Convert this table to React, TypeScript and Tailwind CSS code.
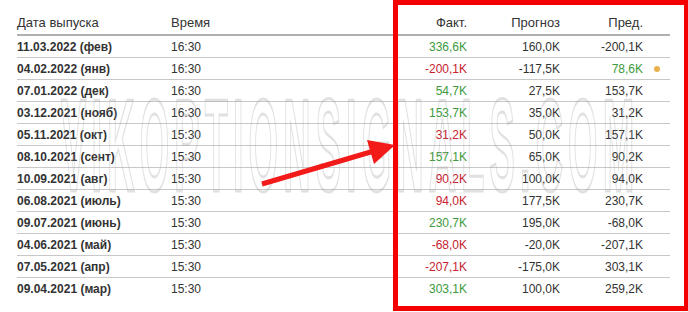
import React from "react";

type Row = { d: string; t: string; a: string; ac: "g" | "r"; f: string; p: string; pc?: "g"; dot?: boolean };

const rows: Row[] = [
  { d: "11.03.2022 (фев)", t: "16:30", a: "336,6K", ac: "g", f: "160,0K", p: "-200,1K" },
  { d: "04.02.2022 (янв)", t: "16:30", a: "-200,1K", ac: "r", f: "-117,5K", p: "78,6K", pc: "g", dot: true },
  { d: "07.01.2022 (дек)", t: "16:30", a: "54,7K", ac: "g", f: "27,5K", p: "153,7K" },
  { d: "03.12.2021 (нояб)", t: "16:30", a: "153,7K", ac: "g", f: "35,0K", p: "31,2K" },
  { d: "05.11.2021 (окт)", t: "15:30", a: "31,2K", ac: "r", f: "50,0K", p: "157,1K" },
  { d: "08.10.2021 (сент)", t: "15:30", a: "157,1K", ac: "g", f: "65,0K", p: "90,2K" },
  { d: "10.09.2021 (авг)", t: "15:30", a: "90,2K", ac: "r", f: "100,0K", p: "94,0K" },
  { d: "06.08.2021 (июль)", t: "15:30", a: "94,0K", ac: "r", f: "177,5K", p: "230,7K" },
  { d: "09.07.2021 (июнь)", t: "15:30", a: "230,7K", ac: "g", f: "195,0K", p: "-68,0K" },
  { d: "04.06.2021 (май)", t: "15:30", a: "-68,0K", ac: "r", f: "-20,0K", p: "-207,1K" },
  { d: "07.05.2021 (апр)", t: "15:30", a: "-207,1K", ac: "r", f: "-175,0K", p: "303,1K" },
  { d: "09.04.2021 (мар)", t: "15:30", a: "303,1K", ac: "g", f: "100,0K", p: "259,2K" },
];

const cols = "grid grid-cols-[154px_200px_96px_93px_83px_27px]";

export default function App() {
  return (
    <div
      className="relative w-[688px] h-[312px] bg-white overflow-hidden text-[#333]"
      style={{ fontFamily: '"Liberation Sans", Arial, sans-serif' }}
    >
      <div className="pl-[17px] w-[670px]">
        <div className={`${cols} border-b-2 border-[#b0b0b0] h-[36px] text-[13px] leading-[15px] pt-[15px]`}>
          <div>Дата выпуска</div>
          <div>Время</div>
          <div className="text-right">Факт.</div>
          <div className="text-right">Прогноз</div>
          <div className="text-right">Пред.</div>
          <div />
        </div>
        {rows.map((r, i) => (
          <div
            key={i}
            className={`${cols} h-[22px] items-center text-[12px] leading-[14px] ${i < rows.length - 1 ? "border-b border-[#c8c8c8]" : ""}`}
          >
            <div className="font-bold">{r.d}</div>
            <div>{r.t}</div>
            <div className={`text-right ${r.ac === "g" ? "text-[#3c9a3c]" : "text-[#c6232f]"}`}>{r.a}</div>
            <div className="text-right">{r.f}</div>
            <div className={`text-right ${r.pc === "g" ? "text-[#3c9a3c]" : ""}`}>{r.p}</div>
            <div className="flex items-center justify-center">
              {r.dot && <span className="block w-[6px] h-[6px] rounded-full bg-[#e9b04c]" />}
            </div>
          </div>
        ))}
      </div>

      {/* watermark */}
      <div className="absolute left-[55px] top-[98px] w-[590px] h-[96px] flex items-center justify-center pointer-events-none">
        <span
          className="block text-[44px] leading-none font-bold tracking-[6px] text-transparent [-webkit-text-stroke:1px_rgba(170,170,170,0.35)] scale-y-[3] scale-x-[0.86] whitespace-nowrap"
          style={{ fontFamily: '"Liberation Sans", Arial, sans-serif' }}
        >
          VIKOPTIONSIGNALS.COM
        </span>
      </div>

      {/* red frame */}
      <div className="absolute left-[393px] top-0 w-[296px] h-[311px] border-[5px] border-[#f40000] pointer-events-none" />

      {/* arrow */}
      <svg className="absolute left-0 top-0 pointer-events-none" width="688" height="312">
        <line x1="262" y1="184" x2="374" y2="151" stroke="#f31a1a" strokeWidth="5" strokeLinecap="butt" />
        <polygon points="367,140 395,145 374,164" fill="#f31a1a" />
      </svg>
    </div>
  );
}
